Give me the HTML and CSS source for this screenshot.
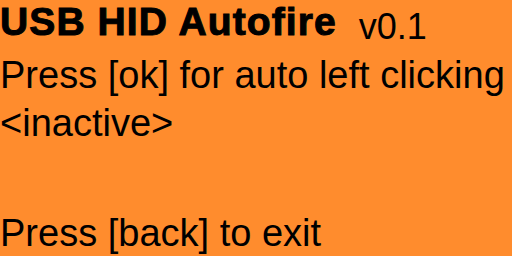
FILE: index.html
```html
<!DOCTYPE html>
<html>
<head>
<meta charset="utf-8">
<link rel="stylesheet" href="styles.css">
</head>
<body>
<div class="screen">
  <div class="title"><span class="name">USB HID Autofire</span><span class="ver">v0.1</span></div>
  <div class="line">Press [ok] for auto left clicking</div>
  <div class="line">&lt;inactive&gt;</div>
  <div class="line bottom">Press [back] to exit</div>
</div>
</body>
</html>
```
FILE: styles.css
```css
html, body {
  margin: 0;
  padding: 0;
  background: #ff8c2d;
}
.screen {
  width: 512px;
  height: 256px;
  display: flex;
  flex-direction: column;
  background: #ff8c2d;
  color: #000;
  font-family: "Liberation Sans", Arial, sans-serif;
  overflow: hidden;
}
.title {
  height: 44px;
  line-height: 44px;
  margin-bottom: 7px;
  white-space: nowrap;
}
.name {
  font-weight: bold;
  font-size: 39px;
  letter-spacing: 1.1px;
  -webkit-text-stroke: 1px #000;
}
.ver {
  font-size: 36px;
  margin-left: 22px;
  vertical-align: -4px;
}
.line {
  font-size: 38px;
  line-height: 48px;
  height: 48px;
  white-space: nowrap;
}
.bottom {
  margin-top: auto;
  line-height: 46px;
  height: 46px;
}
```
